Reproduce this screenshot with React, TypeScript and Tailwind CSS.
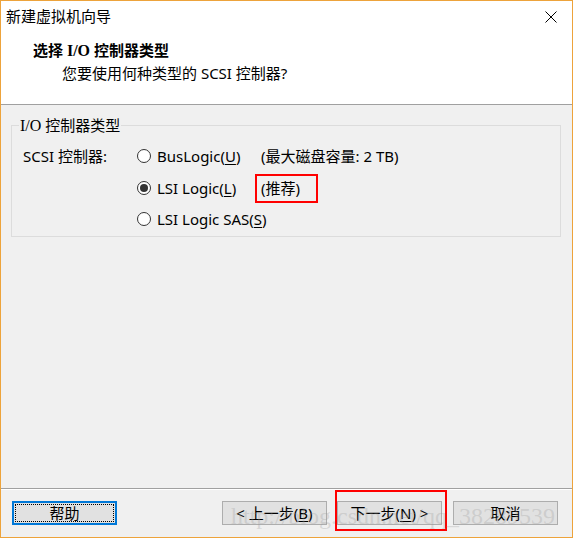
import React from 'react'

const FONT = "font-['Noto_Sans','Noto_Sans_CJK_SC',sans-serif]"

function Mnemonic({ children }: { children: React.ReactNode }) {
  return <span className="underline underline-offset-2 decoration-1">{children}</span>
}

function Radio({ checked }: { checked?: boolean }) {
  return (
    <span className="flex h-[14px] w-[14px] shrink-0 items-center justify-center rounded-full border border-[#333] bg-white">
      {checked && <span className="h-[8px] w-[8px] rounded-full bg-[#333]" />}
    </span>
  )
}

function Button({ children, focused }: { children: React.ReactNode; focused?: boolean }) {
  if (focused) {
    return (
      <div className="h-[24px] w-[105px] border-2 border-[#0078d7] bg-[#e1e1e1] p-px">
        <div className="flex h-full w-full items-center justify-center border border-dotted border-black leading-none">
          <span>{children}</span>
        </div>
      </div>
    )
  }
  return (
    <div className="flex h-[24px] w-[105px] items-center justify-center border border-[#adadad] bg-[#e1e1e1] leading-none">
      <span>{children}</span>
    </div>
  )
}

export default function App() {
  return (
    <div className={`h-[539px] w-[574px] bg-white text-[15px] text-black ${FONT}`}>
      <div className="relative flex h-[538px] w-[573px] flex-col border border-[#eda33b] bg-[#f0f0f0]">
        {/* title bar */}
        <div className="flex h-[30px] shrink-0 items-center justify-between bg-white pl-[5px] pr-[15px]">
          <span className="leading-[20px]">新建虚拟机向导</span>
          <svg width="12" height="12" viewBox="0 0 12 12" className="mt-[1px]">
            <path d="M0.5 0.5 L11.5 11.5 M11.5 0.5 L0.5 11.5" stroke="#000" strokeWidth="1" />
          </svg>
        </div>

        {/* header */}
        <div className="h-[74px] shrink-0 border-b border-[#a0a0a0] bg-white pl-[32px] pt-[9px]">
          <div className="font-bold leading-[20px]">
            选择 <span className="font-['Liberation_Serif',serif] text-[16px]">I/O</span> 控制器类型
          </div>
          <div className="mt-[2px] pl-[29px] leading-[20px]">您要使用何种类型的 SCSI 控制器?</div>
        </div>

        {/* body */}
        <div className="flex-1 px-[10px] pt-[10px]">
          <fieldset className="w-[550px] border border-[#dcdcdc] px-[7px] pb-[2px]">
            <legend className="px-px leading-[20px]">
              <span className="font-['Liberation_Serif',serif] text-[16px]">I/O</span> 控制器类型
            </legend>
            <div className="mt-[4px] flex flex-col">
              <div className="flex h-[32px] items-center">
                <span className="w-[118px] pl-[4px] leading-[20px]">SCSI 控制器:</span>
                <span className="flex w-[118px] items-center gap-[6px] leading-[20px]">
                  <Radio />
                  <span>
                    BusLogic(<Mnemonic>U</Mnemonic>)
                  </span>
                </span>
                <span className="pl-[6px] leading-[20px]">(最大磁盘容量: 2 TB)</span>
              </div>
              <div className="flex h-[32px] items-center">
                <span className="w-[118px]" />
                <span className="flex w-[118px] items-center gap-[6px] leading-[20px]">
                  <Radio checked />
                  <span>
                    LSI Logic(<Mnemonic>L</Mnemonic>)
                  </span>
                </span>
                <span className="flex h-[29px] w-[63px] items-center border-2 border-[#ff0000] pl-[4px] leading-[20px]">
                  (推荐)
                </span>
              </div>
              <div className="flex h-[30px] items-center">
                <span className="w-[118px]" />
                <span className="flex items-center gap-[6px] leading-[20px]">
                  <Radio />
                  <span>
                    LSI Logic SAS(<Mnemonic>S</Mnemonic>)
                  </span>
                </span>
              </div>
            </div>
          </fieldset>
        </div>

        {/* footer */}
        <div className="h-[49px] shrink-0 border-t border-[#a0a0a0]">
          <div className="flex border-t border-white pl-[11px] pt-[11px]">
            <Button focused>帮助</Button>
            <div className="ml-[105px]">
              <Button>
                &lt; 上一步(<Mnemonic>B</Mnemonic>)
              </Button>
            </div>
            <div className="ml-[10px]">
              <Button>
                下一步(<Mnemonic>N</Mnemonic>) &gt;
              </Button>
            </div>
            <div className="ml-[11px]">
              <Button>取消</Button>
            </div>
          </div>
        </div>

        {/* annotation box */}
        <div className="absolute left-[334px] top-[489px] h-[41px] w-[112px] border-2 border-[#ff0000]" />

        {/* watermark */}
        <div className="pointer-events-none absolute left-[230px] top-[500px] whitespace-nowrap font-['Liberation_Serif',serif] text-[24px] leading-[30px] text-[#9a9a9a]/30">
          http://blog.csdn.net/qq_38289539
        </div>
      </div>
    </div>
  )
}
